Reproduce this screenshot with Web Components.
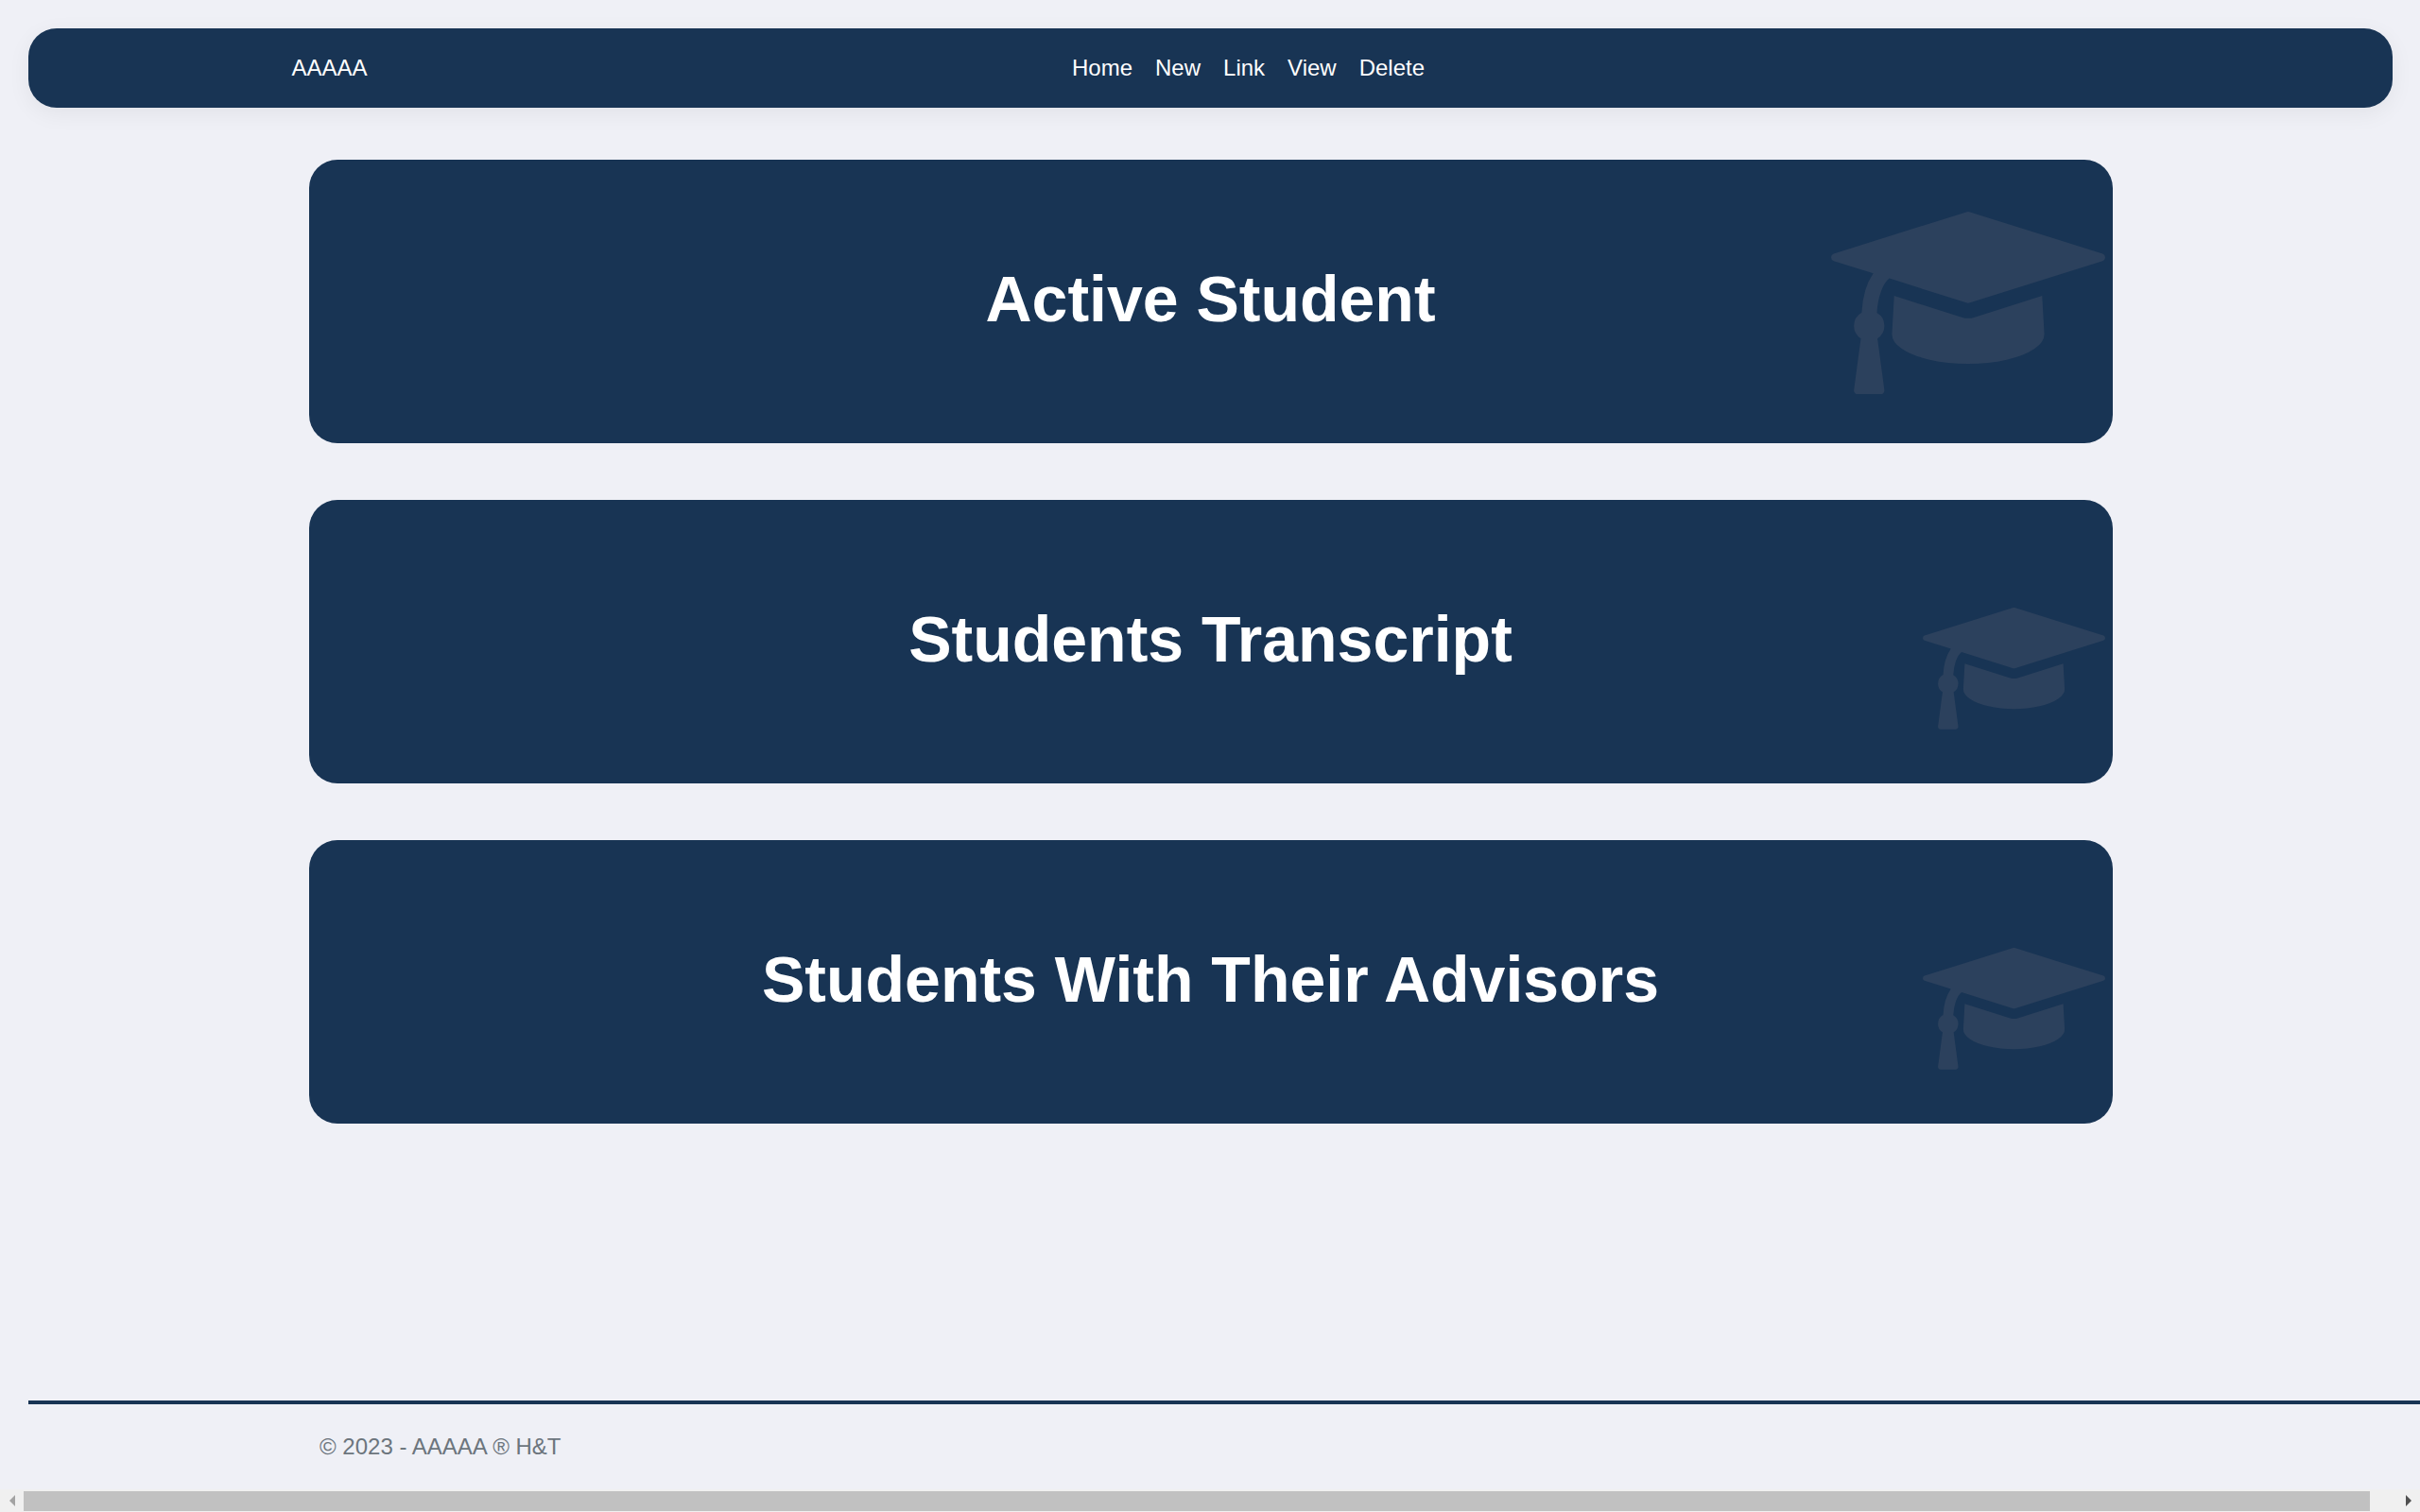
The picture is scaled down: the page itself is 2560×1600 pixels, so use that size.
<!DOCTYPE html>
<html lang="en">
<head>
<meta charset="utf-8">
<meta name="viewport" content="width=device-width, initial-scale=1">
<title>Students</title>
<style>
  :root {
    --navy: #183454;
    --page: #eff0f6;
    --cap: #2c415d;
    --muted: #6c757d;
    --gutter: 30px;
    --gutter-end: 29px;
  }
  html, body { margin: 0; }
  body {
    background: var(--page);
    font-family: "Liberation Sans", Arial, sans-serif;
    font-size: 24px;
    line-height: 36px;
    color: #212529;
  }
</style>
</head>
<body>
<app-shell>
  <nav-bar slot="header" brand="AAAAA">
    <nav-link href="#home">Home</nav-link>
    <nav-link href="#new">New</nav-link>
    <nav-link href="#link">Link</nav-link>
    <nav-link href="#view">View</nav-link>
    <nav-link href="#delete">Delete</nav-link>
  </nav-bar>
  <report-card href="#active" size="large">Active Student</report-card>
  <report-card href="#transcript">Students Transcript</report-card>
  <report-card href="#advisors">Students With Their Advisors</report-card>
  <page-footer slot="footer">© 2023 - AAAAA ® H&amp;T</page-footer>
  <scroll-strip slot="strip"></scroll-strip>
</app-shell>

<script>
const define = (name, html, setup) => {
  const template = document.createElement('template');
  template.innerHTML = html;
  customElements.define(name, class extends HTMLElement {
    constructor() {
      super();
      this.attachShadow({ mode: 'open' }).append(template.content.cloneNode(true));
    }
    connectedCallback() {
      if (setup) setup(this, this.shadowRoot);
    }
  });
};

define('app-shell', `
  <style>
    :host { display: flex; flex-direction: column; min-height: 100vh; overflow: hidden; }
    header { padding: var(--gutter) var(--gutter-end) 0 var(--gutter); }
    main { flex: 1; padding: 55px var(--gutter-end) 55px var(--gutter); }
    .stack {
      max-width: 1908px; margin: 0 auto;
      display: flex; flex-direction: column; gap: 60px;
    }
  </style>
  <header><slot name="header"></slot></header>
  <main><div class="stack"><slot></slot></div></main>
  <slot name="footer"></slot>
  <slot name="strip"></slot>`);

define('nav-bar', `
  <style>
    :host {
      display: block; background: var(--navy); border-radius: 30px; padding: 24px 12px;
      box-shadow: 0 6px 24px rgba(0, 0, 0, .06);
    }
    .inner {
      box-sizing: border-box; max-width: 1980px; margin: 0 auto; padding: 0 18px;
      display: flex; align-items: center;
    }
    a { color: #fff; text-decoration: none; }
    nav { flex: 1; display: flex; justify-content: center; gap: 24px; }
  </style>
  <div class="inner">
    <a href="#"></a>
    <nav aria-label="Main"><slot></slot></nav>
  </div>`, (host, root) => {
    root.querySelector('a').textContent = host.getAttribute('brand');
  });

define('nav-link', `
  <style>
    :host { display: block; }
    a { color: #fff; text-decoration: none; }
  </style>
  <a><slot></slot></a>`, (host, root) => {
    root.querySelector('a').href = host.getAttribute('href');
  });

define('report-card', `
  <style>
    :host { display: block; }
    a {
      position: relative; display: flex; align-items: center; justify-content: center;
      min-height: 300px; border-radius: 30px; overflow: hidden;
      background: var(--navy); color: #fff; text-decoration: none;
    }
    h1 { margin: 0; padding-bottom: 6px; font-size: 68px; line-height: 80px; font-weight: 700; text-align: center; }
    svg { position: absolute; right: 8px; bottom: 57px; width: 193px; fill: var(--cap); }
    :host([size="large"]) svg { bottom: 52px; width: 290px; }
  </style>
  <a>
    <h1><slot></slot></h1>
    <svg viewBox="0 0 2304 1536" aria-hidden="true">
      <path d="M1774 708l18 316q4 69-82 128t-235 93.500t-323 34.500t-323-34.500t-235-93.500t-82-128l18-316l574 181q22 7 48 7t48-7z"/>
      <path d="M2304 384q0 23-22 31l-1120 352q-4 1-10 1t-10-1l-652-206q-43 34-71 111.500t-34 178.500q63 36 63 109q0 69-58 107l58 433q2 14-8 25q-9 11-24 11h-192q-15 0-24-11q-10-11-8-25l58-433q-58-38-58-107q0-73 65-111q11-207 98-330l-333-104q-22-8-22-31t22-31l1120-352q4-1 10-1t10 1l1120 352q22 8 22 31z"/>
    </svg>
  </a>`, (host, root) => {
    root.querySelector('a').href = host.getAttribute('href');
  });

define('page-footer', `
  <style>
    :host {
      display: block; width: 100%; margin-left: var(--gutter);
      border-top: 4px solid var(--navy); color: var(--muted); line-height: 90px;
    }
    footer { box-sizing: border-box; max-width: 1980px; margin: 0 auto; padding: 0 18px; }
  </style>
  <footer><slot></slot></footer>`);

define('scroll-strip', `
  <style>
    :host { display: flex; align-items: center; height: 24px; background: #f0f0f0; }
    .end { flex: none; width: 25px; display: flex; justify-content: center; }
    .track { flex: 1; padding-right: 28px; }
    .thumb { height: 21px; background: #c1c1c1; }
    svg { display: block; width: 6px; height: 12px; }
  </style>
  <div class="end"><svg viewBox="0 0 6 12" fill="#a3a3a3"><path d="M6 0v12L0 6z"/></svg></div>
  <div class="track"><div class="thumb"></div></div>
  <div class="end"><svg viewBox="0 0 6 12" fill="#505050"><path d="M0 0v12l6-6z"/></svg></div>`);
</script>
</body>
</html>
